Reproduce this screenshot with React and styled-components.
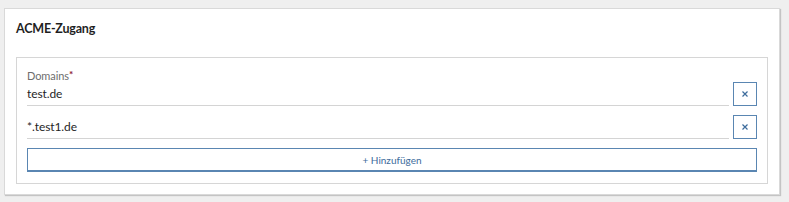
import React from "react";
import styled, { createGlobalStyle } from "styled-components";

const Global = createGlobalStyle`
  html, body { margin: 0; padding: 0; background: #efefef; }
  body { font-family: "Lato", "Open Sans", sans-serif; }
  * { box-sizing: border-box; }
`;

const Page = styled.div`
  padding: 8px 9px 9px 4px;
`;

const Card = styled.section`
  background: #fff;
  border: 1px solid #d9d9d9;
  box-shadow: 1px 1px 1px rgba(0, 0, 0, 0.18);
  padding: 11px 11px 10px 11px;
`;

const Title = styled.h2`
  margin: 0 0 19px 0;
  font-size: 12.5px;
  line-height: 18px;
  font-weight: 700;
  color: #1f1f1f;
  letter-spacing: -0.2px;
`;

const Fieldset = styled.div`
  border: 1px solid #d6d6d6;
  padding: 10px 10px 11px 10px;
  display: flex;
  flex-direction: column;
  gap: 9px;
`;

const FieldGroup = styled.div`
  display: flex;
  flex-direction: column;
`;

const Label = styled.label`
  font-size: 11px;
  line-height: 13px;
  color: #6e6e6e;
  letter-spacing: -0.1px;
`;

const Required = styled.span`
  color: #8e1631;
  font-size: 10px;
  font-weight: 700;
  vertical-align: 2px;
`;

const Row = styled.div`
  display: flex;
  align-items: stretch;
  gap: 4px;
  height: 24px;
`;

const Input = styled.div`
  flex: 1;
  display: flex;
  align-items: center;
  border-bottom: 1px solid #d4d4d4;
  font-size: 12px;
  color: #1f1f1f;
  padding-bottom: 1px;
  letter-spacing: -0.1px;
`;

const IconButton = styled.button`
  width: 24px;
  height: 24px;
  padding: 0;
  background: #fff;
  border: 1px solid #5a86b2;
  display: flex;
  align-items: center;
  justify-content: center;
  cursor: pointer;
`;

const AddButton = styled.button`
  height: 24px;
  background: #fff;
  border: 1px solid #5a86b2;
  border-bottom-width: 2px;
  color: #3d6c9c;
  font-family: "Lato", "Open Sans", sans-serif;
  font-size: 10px;
  display: flex;
  align-items: center;
  justify-content: center;
  padding: 0;
  cursor: pointer;
`;

const Cross = () => (
  <svg width="6" height="6" viewBox="0 0 6 6">
    <path d="M0.5 0.5 L5.5 5.5 M5.5 0.5 L0.5 5.5" stroke="#3d6c9c" strokeWidth="1.2" />
  </svg>
);

const domains = ["test.de", "*.test1.de"];

export default function App() {
  return (
    <>
      <Global />
      <Page>
        <Card>
          <Title>ACME-Zugang</Title>
          <Fieldset>
            {domains.map((d, i) => (
              <FieldGroup key={d}>
                {i === 0 && (
                  <Label>
                    Domains<Required>*</Required>
                  </Label>
                )}
                <Row>
                  <Input>{d}</Input>
                  <IconButton aria-label="Entfernen">
                    <Cross />
                  </IconButton>
                </Row>
              </FieldGroup>
            ))}
            <AddButton>+ Hinzufügen</AddButton>
          </Fieldset>
        </Card>
      </Page>
    </>
  );
}
